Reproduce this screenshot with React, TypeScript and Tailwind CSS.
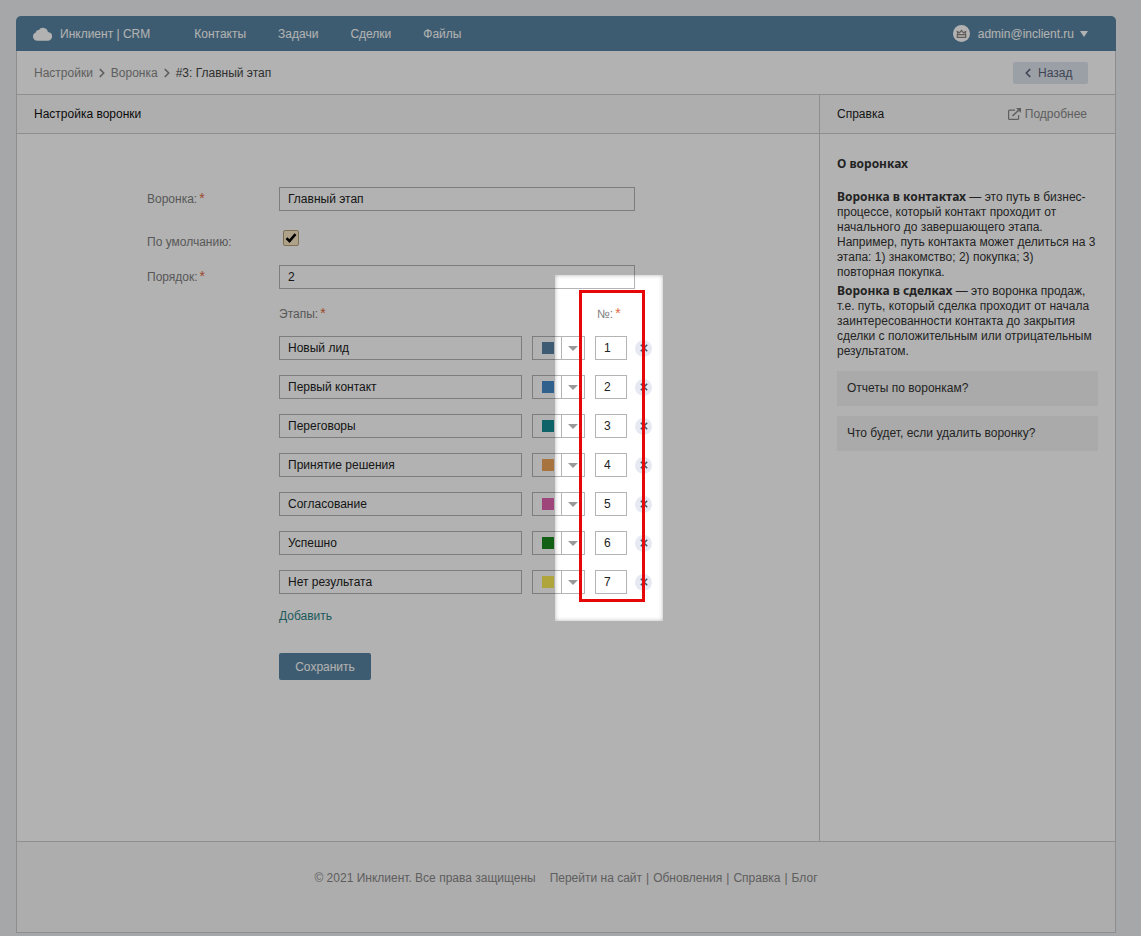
import React, { useState } from "react";
import { ChevronLeft, ChevronRight } from "lucide-react";

interface Stage {
  id: number;
  name: string;
  color: string;
  order: string;
}

const COLORS = ["#5884a6", "#468bca", "#158f95", "#efa75b", "#e364b1", "#1b8a1d", "#fbec56"];

const NAMES = [
  "Новый лид",
  "Первый контакт",
  "Переговоры",
  "Принятие решения",
  "Согласование",
  "Успешно",
  "Нет результата",
];

const MENU = ["Контакты", "Задачи", "Сделки", "Файлы"];

const inputClass = "h-6 border border-[#b4b4b4] bg-white px-2 text-[12px] text-[#222] outline-none";

const boldClass = "font-['Noto_Sans','Open_Sans',sans-serif] leading-3 font-bold";

const Star = () => <span className="ml-0.5 text-[14px] leading-3 text-[#e2683c]">*</span>;

const Header = () => (
  <header className="flex h-[35px] items-center rounded-t-[5px] bg-[#5a85a2] pl-[17px] pr-7 text-white">
    <a href="#" className="flex items-center gap-2">
      <svg width="19" height="14" viewBox="0 0 20 14" fill="currentColor">
        <path d="M4.5 14A4.5 4.5 0 0 1 2.9 5.3 3.2 3.2 0 0 1 6.2 2.9 5.2 5.2 0 0 1 15.7 4.8 4.6 4.6 0 0 1 15.4 14Z" />
      </svg>
      <span>Инклиент | CRM</span>
    </a>
    <nav className="ml-11 flex gap-8">
      {MENU.map((item) => (
        <a key={item} href="#">
          {item}
        </a>
      ))}
    </nav>
    <button className="ml-auto flex items-center gap-2">
      <svg width="17" height="17" viewBox="0 0 17 17">
        <circle cx="8.5" cy="8.5" r="8.5" fill="#fff" />
        <path
          d="M4.3 6.6 6.6 7.7 8.5 5.4l1.9 2.3 2.3-1.1-.7 3.1H5ZM4.3 9v3.4h8.4V9"
          fill="none"
          stroke="#8a8580"
          strokeWidth="1.2"
        />
      </svg>
      <span>admin@inclient.ru</span>
      <svg width="8" height="6" viewBox="0 0 8 6" fill="currentColor" className="-ml-0.5">
        <path d="M0 0h8L4 6Z" />
      </svg>
    </button>
  </header>
);

const Breadcrumbs = () => (
  <div className="flex h-11 items-center border-b border-[#cccccc] pl-[17px] pr-[27px]">
    <nav className="flex items-center gap-0.5 text-[#888]">
      <a href="#">Настройки</a>
      <ChevronRight size={14} strokeWidth={3} />
      <a href="#">Воронка</a>
      <ChevronRight size={14} strokeWidth={3} />
      <span className="text-[#444]">#3: Главный этап</span>
    </nav>
    <button className="ml-auto flex h-[22px] w-[75px] items-center gap-[3px] rounded-xs bg-[#dfe5ef] pl-2 text-[#5b6379]">
      <ChevronLeft size={14} strokeWidth={3} />
      Назад
    </button>
  </div>
);

const Help = () => (
  <aside className="w-[296px] shrink-0 border-l border-[#cccccc]">
    <div className="flex h-[39px] items-center justify-between border-b border-[#cccccc] bg-[#fafafa] pl-[17px] pr-7">
      <h2 className="text-[#222]">Справка</h2>
      <a href="#" className="flex items-center gap-1 text-[#888]">
        <svg width="13" height="12" viewBox="0 0 13 12" fill="none" stroke="currentColor" strokeWidth="1.2">
          <path d="M7 2.2H1.6a1 1 0 0 0-1 1v7.2a1 1 0 0 0 1 1h8a1 1 0 0 0 1-1V7" />
          <path d="M4.5 8 11 1.8" strokeWidth="1.6" />
          <path d="M8 0h5v5Z" fill="currentColor" stroke="none" />
        </svg>
        Подробнее
      </a>
    </div>
    <div className="px-[17px] pt-6 leading-[15px] text-[#333]">
      <h3 className={boldClass}>О воронках</h3>
      <p className="mt-5">
        <b className={boldClass}>Воронка в контактах</b> — это путь в бизнес-процессе, который контакт проходит от
        начального до завершающего этапа. Например, путь контакта может делиться на 3 этапа: 1) знакомство; 2)
        покупка; 3) повторная&nbsp;покупка.
      </p>
      <p className="mt-1">
        <b className={boldClass}>Воронка в сделках</b> — это воронка продаж, т.е. путь, который сделка проходит от
        начала заинтересованности контакта до закрытия сделки с положительным или отрицательным результатом.
      </p>
      <button className="mt-3 block h-[35px] w-full bg-[#f4f4f4] px-2.5 text-left">Отчеты по воронкам?</button>
      <button className="mt-2.5 block h-[35px] w-full bg-[#f4f4f4] px-2.5 text-left">
        Что будет, если удалить воронку?
      </button>
    </div>
  </aside>
);

interface StageRowProps {
  stage: Stage;
  onChange: (patch: Partial<Stage>) => void;
  onRemove: () => void;
}

const StageRow: React.FC<StageRowProps> = ({ stage, onChange, onRemove }) => (
  <li className="flex items-center">
    <input
      aria-label="Название этапа"
      className={`${inputClass} w-[243px]`}
      value={stage.name}
      onChange={(e) => onChange({ name: e.target.value })}
    />
    <div className="relative ml-2.5 flex h-6 w-[53px] border border-[#b4b4b4] bg-white">
      <span className="flex w-7 items-center justify-end pr-[7px]">
        <span className="h-3 w-3" style={{ backgroundColor: stage.color }} />
      </span>
      <span className="flex flex-1 items-center justify-center border-l border-[#b4b4b4]">
        <svg width="10" height="5" viewBox="0 0 10 5" fill="#999">
          <path d="M0 0h10L5 5Z" />
        </svg>
      </span>
      <select
        aria-label="Цвет этапа"
        className="absolute inset-0 cursor-pointer appearance-none"
        value={stage.color}
        onChange={(e) => onChange({ color: e.target.value })}
      >
        {COLORS.map((color) => (
          <option key={color} value={color} style={{ backgroundColor: color }} />
        ))}
      </select>
    </div>
    <input
      aria-label="Номер этапа"
      className={`${inputClass} ml-2.5 w-8`}
      value={stage.order}
      onChange={(e) => onChange({ order: e.target.value })}
    />
    <button
      type="button"
      aria-label="Удалить этап"
      onClick={onRemove}
      className="ml-2 flex h-[17px] w-[17px] items-center justify-center rounded-full bg-[#e6e9f2]"
    >
      <svg width="8" height="8" viewBox="0 0 8 8" stroke="#4a5068" strokeWidth="1.6">
        <path d="m.8.8 6.4 6.4M7.2.8.8 7.2" />
      </svg>
    </button>
  </li>
);

const FunnelForm = () => {
  const [title, setTitle] = useState("Главный этап");
  const [isDefault, setIsDefault] = useState(true);
  const [order, setOrder] = useState("2");
  const [stages, setStages] = useState<Stage[]>(
    NAMES.map((name, i) => ({ id: i + 1, name, color: COLORS[i], order: String(i + 1) }))
  );

  const updateStage = (id: number, patch: Partial<Stage>) => {
    setStages(stages.map((s) => (s.id === id ? { ...s, ...patch } : s)));
  };

  const addStage = () => {
    const id = Math.max(0, ...stages.map((s) => s.id)) + 1;
    setStages([...stages, { id, name: "", color: COLORS[0], order: String(stages.length + 1) }]);
  };

  return (
    <form className="pb-10 pl-[130px] pt-[53px] text-[#808080]" onSubmit={(e) => e.preventDefault()}>
      <div className="flex items-center">
        <label htmlFor="title" className="w-[132px]">
          Воронка:
          <Star />
        </label>
        <input
          id="title"
          className={`${inputClass} w-[356px]`}
          value={title}
          onChange={(e) => setTitle(e.target.value)}
        />
      </div>

      <div className="mt-[19px] flex h-5 items-start">
        <label htmlFor="default" className="w-[132px] self-end">
          По умолчанию:
        </label>
        <span className="relative ml-1 h-4 w-4">
          <input
            id="default"
            type="checkbox"
            checked={isDefault}
            onChange={(e) => setIsDefault(e.target.checked)}
            className="peer block h-4 w-4 appearance-none rounded-xs border border-[#b59f78] bg-[#fbe9c6]"
          />
          <svg
            viewBox="0 0 16 16"
            className="pointer-events-none absolute inset-0 hidden peer-checked:block"
            fill="none"
            stroke="#000"
            strokeWidth="2.6"
          >
            <path d="m3.5 8.2 3 3L12.5 4.2" />
          </svg>
        </span>
      </div>

      <div className="mt-[15px] flex items-center">
        <label htmlFor="order" className="w-[132px]">
          Порядок:
          <Star />
        </label>
        <input
          id="order"
          className={`${inputClass} w-[356px]`}
          value={order}
          onChange={(e) => setOrder(e.target.value)}
        />
      </div>

      <div className="ml-[132px] mt-4">
        <div className="relative">
          <div className="flex h-[18px] items-center">
            <span className="w-[318px]">
              Этапы:
              <Star />
            </span>
            <span>
              №:
              <Star />
            </span>
          </div>
          <ul className="mt-[13px] flex flex-col gap-[15px]">
            {stages.map((stage) => (
              <StageRow
                key={stage.id}
                stage={stage}
                onChange={(patch) => updateStage(stage.id, patch)}
                onRemove={() => setStages(stages.filter((s) => s.id !== stage.id))}
              />
            ))}
          </ul>

          {/* dims everything except the order column */}
          <div className="pointer-events-none absolute -bottom-[27px] -top-[30px] left-[276px] z-10 w-[108px] shadow-[0_0_5px_2000px_rgba(0,0,0,0.3),inset_0_0_4px_rgba(0,0,0,0.3)]" />
          <div className="pointer-events-none absolute -bottom-2 -top-[15px] left-[300px] z-20 w-[66px] border-3 border-[#e60808]" />
        </div>

        <button type="button" onClick={addStage} className="mt-3.5 block h-4 text-[#2f8286]">
          Добавить
        </button>
        <button
          type="submit"
          className="mt-[29px] block h-[27px] w-[92px] rounded-xs bg-[#5a85a2] text-white"
        >
          Сохранить
        </button>
      </div>
    </form>
  );
};

const Footer = () => (
  <footer className="flex h-[91px] items-center justify-center gap-3.5 border-t border-[#cccccc] bg-[#f8f8f8] pb-[18px] text-[#888]">
    <span>© 2021 Инклиент. Все права защищены</span>
    <nav className="flex gap-1">
      <a href="#">Перейти на сайт</a>|<a href="#">Обновления</a>|<a href="#">Справка</a>|<a href="#">Блог</a>
    </nav>
  </footer>
);

const App = () => {
  return (
    <div className="flex min-h-screen flex-col overflow-hidden bg-[#eceff1] pb-[3px] pl-4 pr-[25px] pt-4 font-['Liberation_Sans',Arial,sans-serif] text-[12px] leading-4">
      <Header />
      <div className="flex flex-1 flex-col border border-t-0 border-[#cccccc] bg-white">
        <Breadcrumbs />
        <div className="flex flex-1">
          <main className="min-w-0 flex-1">
            <h1 className="flex h-[39px] items-center border-b border-[#cccccc] bg-[#fafafa] px-[17px] text-[#111]">
              Настройка воронки
            </h1>
            <FunnelForm />
          </main>
          <Help />
        </div>
        <Footer />
      </div>
    </div>
  );
};

export default App;
